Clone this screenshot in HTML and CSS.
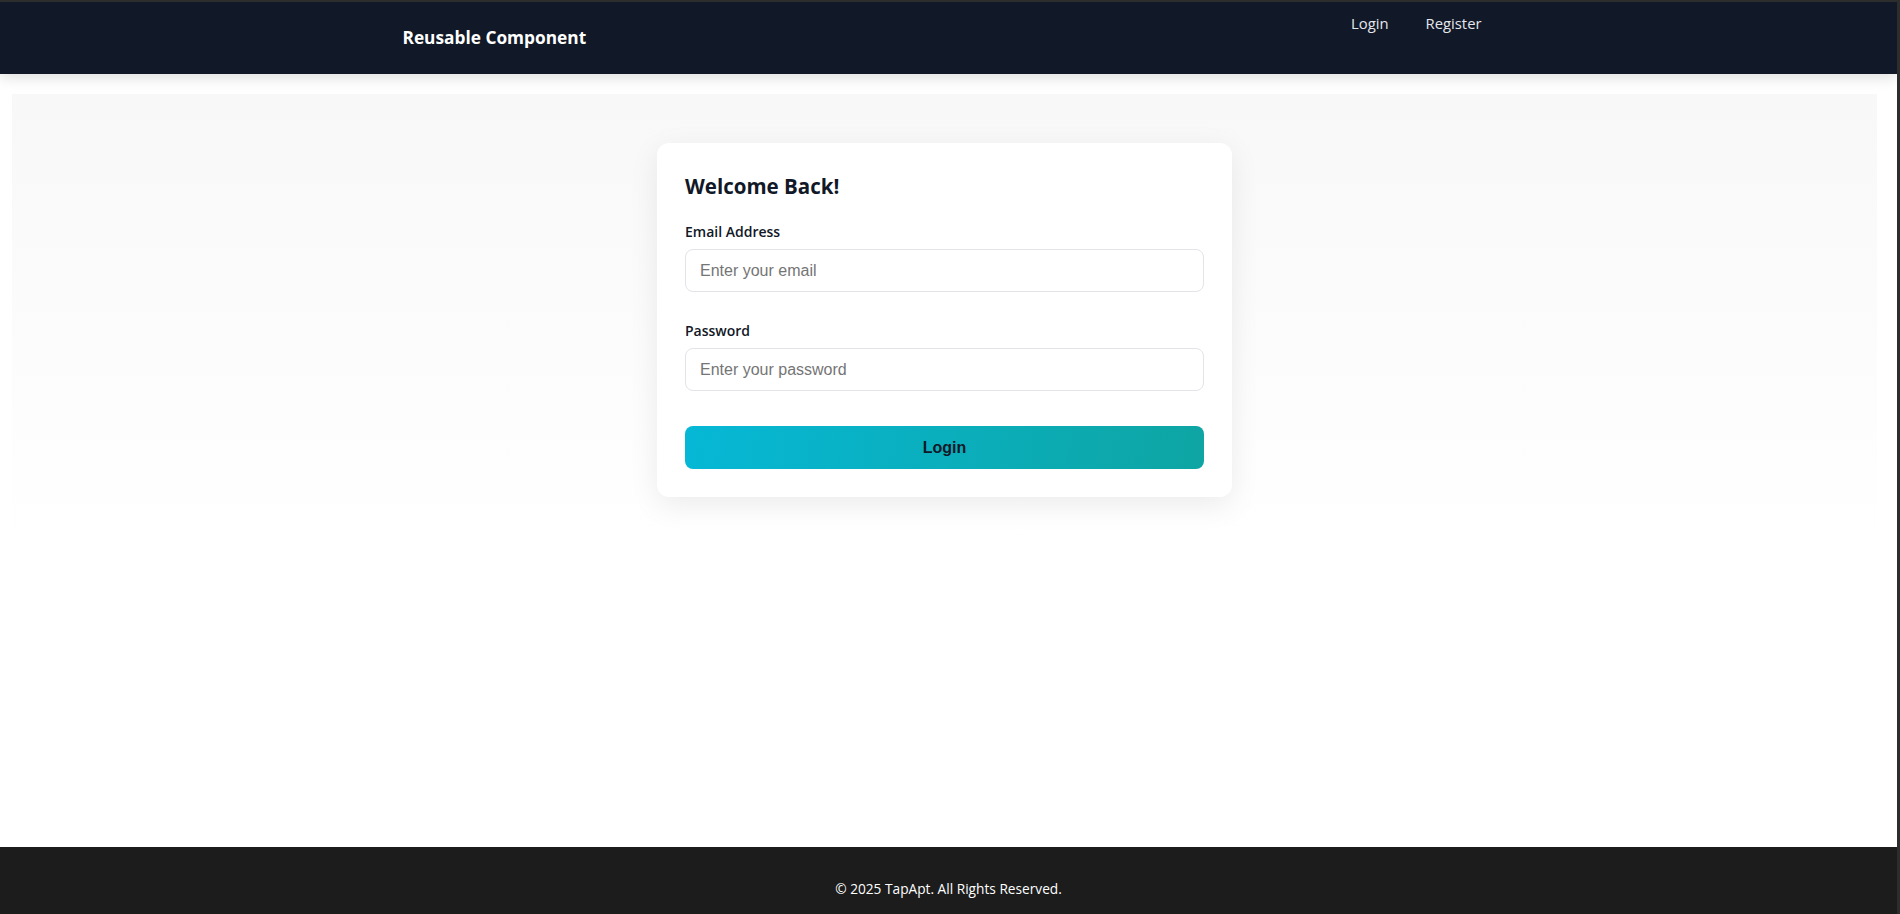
FILE: index.html
```html
<!DOCTYPE html>
<html lang="en">
<head>
<meta charset="utf-8">
<title>Reusable Component</title>
<link rel="stylesheet" href="styles.css">
</head>
<body>
<div class="app">
  <header class="site-header">
    <div class="header-inner">
      <div class="brand">Reusable Component</div>
      <nav class="nav">
        <a class="nav-link" href="#">Login</a>
        <a class="nav-link" href="#">Register</a>
      </nav>
    </div>
  </header>
  <main class="main">
    <section class="auth-section">
      <div class="card">
        <h2 class="card-title">Welcome Back!</h2>
        <form class="form">
          <div class="field">
            <label class="label" for="email">Email Address</label>
            <input class="input" id="email" type="email" placeholder="Enter your email">
          </div>
          <div class="field">
            <label class="label" for="password">Password</label>
            <input class="input" id="password" type="password" placeholder="Enter your password">
          </div>
          <button class="btn" type="button">Login</button>
        </form>
      </div>
    </section>
  </main>
  <footer class="site-footer">© 2025 TapApt. All Rights Reserved.</footer>
</div>
</body>
</html>
```
FILE: styles.css
```css
html { background: #2d2d2d; }
body { margin: 2px 3px 0 0; background: #fff; font-family: "Open Sans", "Noto Sans", sans-serif; }
.app { min-height: 912px; display: flex; flex-direction: column; }
.site-header { height: 72px; background: #111827; box-shadow: 0 3px 14px rgba(0,0,0,0.14); position: relative; z-index: 1; }
.header-inner { max-width: 1092px; margin: 0 auto; padding: 0 24px; display: flex; justify-content: space-between; align-items: flex-start; height: 100%; }
.brand { align-self: center; color: #fff; font-weight: 700; font-size: 17.3px; line-height: 24px; }
.nav { display: flex; gap: 37px; padding-top: 9px; margin-right: 13px; }
.nav-link { color: #e5e7eb; text-decoration: none; font-size: 14.8px; line-height: 24px; }
.main { flex: 1; padding: 20px 20px 0 12px; }
.auth-section { background: linear-gradient(to bottom, #f8f8f8, #fff); padding: 49px 0; display: flex; justify-content: center; }
.card { width: 519px; padding: 28px; background: #fff; border-radius: 12px; box-shadow: 0 8px 30px rgba(0,0,0,0.08); }
.card-title { margin: 0 0 20px; font-size: 20.5px; line-height: 30px; font-weight: 700; color: #111827; }
.form { display: flex; flex-direction: column; margin: 0; }
.field { display: flex; flex-direction: column; margin-bottom: 28px; }
.field + .field { margin-bottom: 35px; }
.label { font-size: 14px; line-height: 22px; font-weight: 600; color: #111827; margin-bottom: 6px; }
.input { box-sizing: border-box; height: 43px; padding: 0 14px; border: 1px solid #e2e4e8; border-radius: 8px; font-family: "Liberation Sans", Arial, sans-serif; font-size: 16px; color: #111827; background: #fff; }
.input::placeholder { color: #757575; }
.btn { height: 43px; border: 0; border-radius: 8px; background: linear-gradient(100deg, #06b8d6, #0ea5a3); color: #111827; font-family: "Liberation Sans", Arial, sans-serif; font-weight: 700; font-size: 16px; cursor: pointer; }
.site-footer { height: 67px; box-sizing: border-box; padding-top: 32px; background: #1c1c1c; color: #fff; text-align: center; font-size: 13.7px; line-height: 20px; }
```
